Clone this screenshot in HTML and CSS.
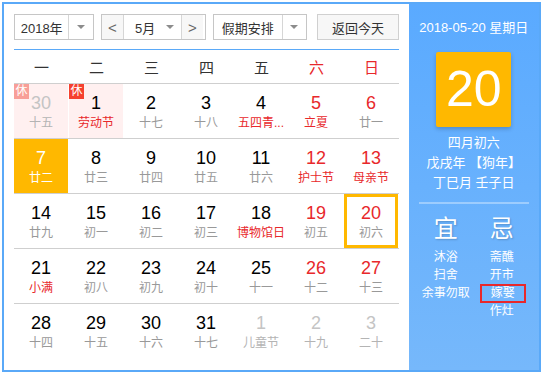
FILE: index.html
```html
<!DOCTYPE html>
<html>
  <head>
    <meta charset="utf-8">
    <title>万年历</title>
    <link rel="stylesheet" href="styles.css">
  </head>
  <body>
    <div class="cal">
      <div class="main">
        <div class="toolbar">
          <div class="sel sel-year">
            <span class="sel-text">2018年</span>
            <span class="sel-arrow"><i class="tri"></i></span>
          </div>
          <div class="sel month-group">
            <span class="nav-btn">&lt;</span>
            <span class="month-text">5月</span>
            <span class="month-arrow"><i class="tri"></i></span>
            <span class="nav-btn nav-next">&gt;</span>
          </div>
          <div class="sel sel-holiday">
            <span class="sel-text">假期安排</span>
            <span class="sel-arrow"><i class="tri"></i></span>
          </div>
          <div class="btn-today">返回今天</div>
        </div>

        <div class="weekhead">
          <span>一</span><span>二</span><span>三</span><span>四</span><span>五</span>
          <span class="red">六</span><span class="red">日</span>
        </div>

        <div class="row">
          <div class="cell other holiday"><i class="rest faded">休</i><b class="num">30</b><span class="lunar">十五</span></div>
          <div class="cell holiday"><i class="rest">休</i><b class="num">1</b><span class="lunar fest">劳动节</span></div>
          <div class="cell"><b class="num">2</b><span class="lunar">十七</span></div>
          <div class="cell"><b class="num">3</b><span class="lunar">十八</span></div>
          <div class="cell"><b class="num">4</b><span class="lunar fest">五四青...</span></div>
          <div class="cell weekend"><b class="num">5</b><span class="lunar fest">立夏</span></div>
          <div class="cell weekend"><b class="num">6</b><span class="lunar">廿一</span></div>
        </div>
        <div class="row">
          <div class="cell hover"><b class="num">7</b><span class="lunar">廿二</span></div>
          <div class="cell"><b class="num">8</b><span class="lunar">廿三</span></div>
          <div class="cell"><b class="num">9</b><span class="lunar">廿四</span></div>
          <div class="cell"><b class="num">10</b><span class="lunar">廿五</span></div>
          <div class="cell"><b class="num">11</b><span class="lunar">廿六</span></div>
          <div class="cell weekend"><b class="num">12</b><span class="lunar fest">护士节</span></div>
          <div class="cell weekend"><b class="num">13</b><span class="lunar fest">母亲节</span></div>
        </div>
        <div class="row">
          <div class="cell"><b class="num">14</b><span class="lunar">廿九</span></div>
          <div class="cell"><b class="num">15</b><span class="lunar">初一</span></div>
          <div class="cell"><b class="num">16</b><span class="lunar">初二</span></div>
          <div class="cell"><b class="num">17</b><span class="lunar">初三</span></div>
          <div class="cell"><b class="num">18</b><span class="lunar fest">博物馆日</span></div>
          <div class="cell weekend"><b class="num">19</b><span class="lunar">初五</span></div>
          <div class="cell weekend selected"><b class="num">20</b><span class="lunar">初六</span></div>
        </div>
        <div class="row">
          <div class="cell"><b class="num">21</b><span class="lunar fest">小满</span></div>
          <div class="cell"><b class="num">22</b><span class="lunar">初八</span></div>
          <div class="cell"><b class="num">23</b><span class="lunar">初九</span></div>
          <div class="cell"><b class="num">24</b><span class="lunar">初十</span></div>
          <div class="cell"><b class="num">25</b><span class="lunar">十一</span></div>
          <div class="cell weekend"><b class="num">26</b><span class="lunar">十二</span></div>
          <div class="cell weekend"><b class="num">27</b><span class="lunar">十三</span></div>
        </div>
        <div class="row last">
          <div class="cell"><b class="num">28</b><span class="lunar">十四</span></div>
          <div class="cell"><b class="num">29</b><span class="lunar">十五</span></div>
          <div class="cell"><b class="num">30</b><span class="lunar">十六</span></div>
          <div class="cell"><b class="num">31</b><span class="lunar">十七</span></div>
          <div class="cell other"><b class="num">1</b><span class="lunar">儿童节</span></div>
          <div class="cell other"><b class="num">2</b><span class="lunar">十九</span></div>
          <div class="cell other"><b class="num">3</b><span class="lunar">二十</span></div>
        </div>
      </div>

      <div class="side">
        <div class="side-date">2018-05-20 星期日</div>
        <div class="day-box">20</div>
        <div class="side-lunar">四月初六</div>
        <div class="side-lunar">戊戌年 【狗年】</div>
        <div class="side-lunar">丁巳月 壬子日</div>
        <div class="divider"></div>
        <div class="yiji">
          <div class="col">
            <div class="col-title">宜</div>
            <div class="col-item">沐浴</div>
            <div class="col-item">扫舍</div>
            <div class="col-item">余事勿取</div>
          </div>
          <div class="col">
            <div class="col-title">忌</div>
            <div class="col-item">斋醮</div>
            <div class="col-item">开市</div>
            <div class="col-item"><span class="mark">嫁娶</span></div>
            <div class="col-item">作灶</div>
          </div>
        </div>
      </div>
    </div>
  </body>
</html>
```
FILE: styles.css
```css
* {
    box-sizing: border-box;
    font-family: "Liberation Sans", "Noto Sans CJK SC", sans-serif;
}
body {
    margin: 0;
    background: #fff;
}
.cal {
    display: flex;
    margin: 2px;
    width: 539px;
    height: 370px;
    border: 2px solid #5aa9f8;
}
.main {
    width: 406px;
    padding: 10px 0 0 10px;
}

/* toolbar */
.toolbar {
    display: flex;
    height: 26px;
    color: #333;
    font-size: 13px;
}
.sel {
    display: flex;
    height: 26px;
    border: 1px solid #c6c6c6;
    background: #fff;
}
.sel-text {
    display: flex;
    align-items: center;
    justify-content: center;
    border-right: 1px solid #d6d6d6;
}
.sel-arrow {
    display: flex;
    align-items: center;
    justify-content: center;
    width: 24px;
}
.tri {
    width: 0;
    height: 0;
    border-left: 4px solid transparent;
    border-right: 4px solid transparent;
    border-top: 4px solid #8c8c8c;
}
.sel-year { width: 80px; }
.sel-year .sel-text { width: 55px; }
.month-group {
    width: 105px;
    margin-left: 7px;
}
.nav-btn {
    display: flex;
    align-items: center;
    justify-content: center;
    width: 22px;
    background: #f7f7f7;
    border-right: 1px solid #d6d6d6;
    color: #666;
    font-size: 15px;
}
.nav-next {
    border-right: none;
    border-left: 1px solid #d6d6d6;
}
.month-text {
    display: flex;
    align-items: center;
    padding-left: 11px;
    width: 42px;
}
.month-arrow {
    display: flex;
    align-items: center;
    width: 15px;
}
.sel-holiday {
    width: 94px;
    margin-left: 7px;
}
.sel-holiday .sel-text { width: 70px; }
.btn-today {
    display: flex;
    align-items: center;
    justify-content: center;
    width: 82px;
    margin-left: 10px;
    border: 1px solid #d0d0d0;
    background: #f7f7f7;
}

/* weekdays */
.weekhead {
    display: flex;
    width: 385px;
    height: 35px;
    margin-top: 9px;
    border-top: 1px solid #5aa9f8;
    border-bottom: 1px solid #cfcfcf;
    font-size: 15px;
    color: #333;
}
.weekhead span {
    width: 55px;
    display: flex;
    align-items: center;
    justify-content: center;
}
.weekhead .red { color: #e8282b; }

/* days */
.row {
    display: flex;
    width: 385px;
    height: 55px;
    border-bottom: 1px solid #cfcfcf;
}
.row.last { border-bottom: none; }
.cell {
    position: relative;
    display: flex;
    flex-direction: column;
    align-items: center;
    width: 54px;
    height: 54px;
    margin-right: 1px;
    padding-top: 9px;
}
.num {
    font-weight: normal;
    font-size: 18px;
    line-height: 20px;
    color: #000;
}
.lunar {
    margin-top: 2px;
    font-size: 12px;
    line-height: 16px;
    color: #999;
    white-space: nowrap;
}
.lunar.fest { color: #e8282b; }
.weekend .num { color: #e8282b; }
.other .num { color: #c4c4c4; }
.other .lunar { color: #b4b4b4; }
.holiday { background: #fff0f0; }
.rest {
    position: absolute;
    top: 0;
    left: 0;
    width: 15px;
    height: 15px;
    font-style: normal;
    font-size: 12px;
    line-height: 15px;
    text-align: center;
    color: #fff;
    background: #f5412f;
}
.rest.faded { background: #f89f98; }
.hover { background: #ffb800; }
.hover .num, .hover .lunar { color: #fff; }
.selected {
    border: 3px solid #ffb800;
    padding-top: 6px;
}

/* side panel */
.side {
    width: 131px;
    background: linear-gradient(#5aaaff, #76b8fb);
    color: #fff;
    text-align: center;
    padding-top: 14px;
}
.side-date {
    font-size: 13px;
    line-height: 20px;
}
.day-box {
    width: 75px;
    height: 75px;
    margin: 14px auto 6px;
    background: #ffb800;
    border-radius: 2px;
    box-shadow: 0 2px 4px rgba(0, 0, 0, 0.2);
    font-size: 50px;
    line-height: 75px;
}
.side-lunar {
    font-size: 13px;
    line-height: 20px;
}
.divider {
    height: 2px;
    margin: 9px 10px 0;
    background: rgba(255, 255, 255, 0.35);
}
.yiji {
    display: flex;
    justify-content: center;
    margin-top: 10px;
}
.col { width: 56px; }
.col-title {
    font-size: 24px;
    line-height: 30px;
    margin-bottom: 4px;
    text-shadow: 1px 1px 2px rgba(0, 0, 0, 0.2);
}
.col-item {
    font-size: 12px;
    line-height: 18px;
    white-space: nowrap;
}
.mark {
    display: inline-block;
    line-height: 15px;
    padding: 0 9px 0 9px;
    margin: 0 -7px 0 -5px;
    outline: 2px solid #e8282b;
}
```
